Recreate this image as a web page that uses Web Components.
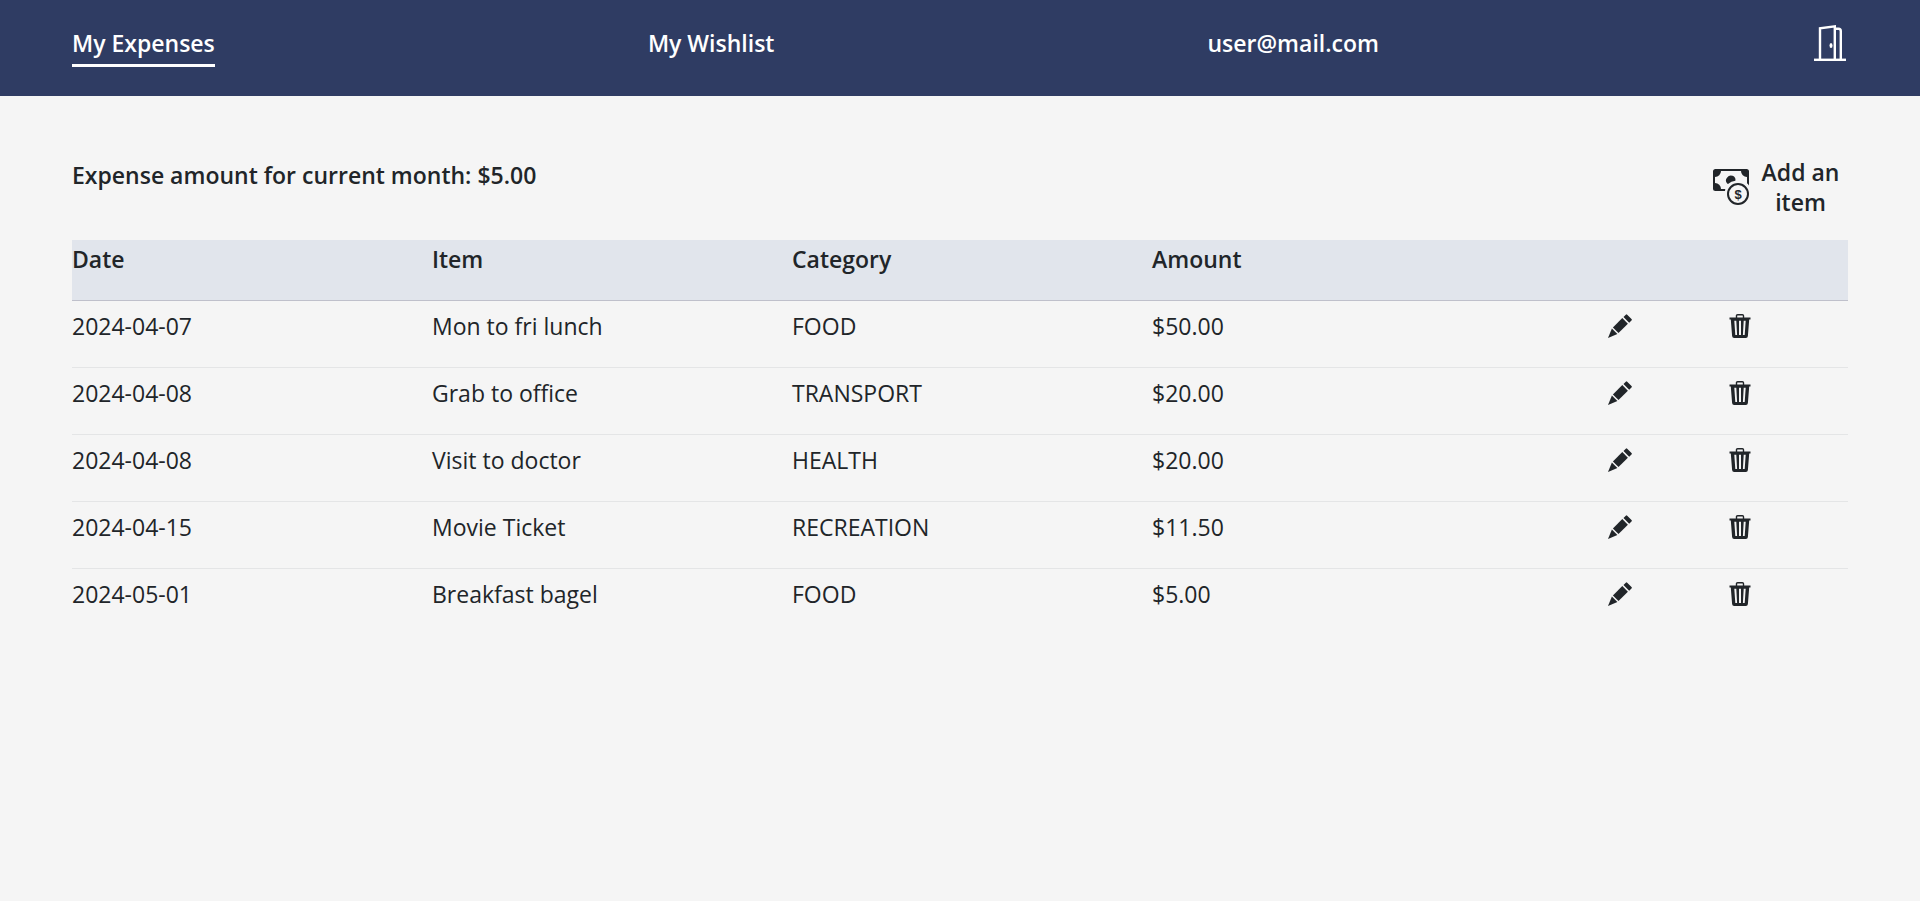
<!DOCTYPE html>
<html lang="en">
<head>
<meta charset="utf-8">
<meta name="viewport" content="width=device-width, initial-scale=1">
<title>My Expenses</title>
<style>
  body {
    margin: 0;
    background: #f5f5f5;
    color: #212529;
    font-family: "Segoe UI", "Open Sans", "Noto Sans", sans-serif;
    font-size: 23px;
    line-height: 36px;
  }
</style>
</head>
<body>
<app-header>
  <nav-link href="#expenses" current>My Expenses</nav-link>
  <nav-link href="#wishlist">My Wishlist</nav-link>
  <nav-link href="#account">user@mail.com</nav-link>
  <nav-link href="#logout" label="Log out"><app-icon name="door"></app-icon></nav-link>
</app-header>
<expense-page>
  <expense-summary slot="summary" amount="$5.00"></expense-summary>
  <expense-table></expense-table>
</expense-page>

<script>
const ICONS = {
  door: `<svg width="36" height="36" viewBox="0 0 36 36" fill="none" stroke="currentColor" stroke-width="2.400">
    <path d="M2 34.800h32"/><path d="M8 35V3.400L22.800 1.400V35"/><path d="M23 3.800h3.500q2.300 0 2.300 2.300V35"/>
    <ellipse cx="19" cy="20.500" rx="1.500" ry="2.500" fill="currentColor" stroke="none"/></svg>`,
  money: `<svg width="36" height="36" viewBox="0 0 36 36" fill="currentColor">
    <path d="M2.500 0h31a2.500 2.500 0 0 1 2.500 2.500V16.500a13 13 0 0 0-2-2.300V8a6 6 0 0 1-6-6H8a6 6 0 0 1-6 6v6a6 6 0 0 1 6 6h4.300a13 13 0 0 0-.3 2H2.500A2.500 2.500 0 0 1 0 19.500v-17A2.500 2.500 0 0 1 2.500 0z"/>
    <path d="M14.200 14.500A4.500 4.500 0 0 1 14.200 8.500a4.500 4.500 0 0 1 8.200 3.200 12.500 12.500 0 0 0-7.400 3.300z"/>
    <circle cx="25" cy="25" r="10" fill="none" stroke="currentColor" stroke-width="2"/>
    <text x="25" y="29.500" text-anchor="middle" font-family="Liberation Sans, sans-serif" font-size="13">$</text></svg>`,
  pencil: `<svg width="24" height="24" viewBox="0 0 24 24" fill="currentColor">
    <path d="M0 24 3.900 14.600 9.400 20z"/><path d="M4.900 13.400 14.300 4.100 19.900 9.700 10.500 19z"/>
    <path d="M15.500 3 17.800.7q.7-.7 1.400 0l4.300 4.300q.7.700 0 1.400L21.200 8.700z"/></svg>`,
  trash: `<svg width="24" height="24" viewBox="0 0 24 24">
    <path d="M8.500 4V1.800q0-1.100 1.100-1.100h4.800q1.100 0 1.100 1.100V4" fill="none" stroke="currentColor" stroke-width="1.400"/>
    <path fill="currentColor" fill-rule="evenodd" d="M1.500 3.400h21v2h-1.300L19.900 22q-.2 2-2 2H6.100q-1.800 0-2-2L2.800 5.400H1.500zM6.300 6.800 7.300 21h1.800L8.300 6.800zM11 6.800V21h2V6.800zM15.700 6.800 14.900 21h1.800L17.700 6.800z"/></svg>`
};

class AppIcon extends HTMLElement {
  constructor() { super(); this.attachShadow({ mode: "open" }); }
  connectedCallback() {
    this.shadowRoot.innerHTML = `<style>:host{display:block;flex:none}svg{display:block}</style>` +
      ICONS[this.getAttribute("name")].replace("<svg", '<svg aria-hidden="true"');
  }
}
customElements.define("app-icon", AppIcon);

class NavLink extends HTMLElement {
  constructor() { super(); this.attachShadow({ mode: "open" }); }
  connectedCallback() {
    this.shadowRoot.innerHTML = `<style>
      :host { display: block; }
      a { display: block; color: #fff; font-weight: 600; text-decoration: none;
          padding-bottom: 3px; border-bottom: 3px solid transparent; }
      :host([current]) a { border-color: #fff; }
    </style><a><slot></slot></a>`;
    const a = this.shadowRoot.querySelector("a");
    a.href = this.getAttribute("href");
    if (this.hasAttribute("label")) a.setAttribute("aria-label", this.getAttribute("label"));
    if (this.hasAttribute("current")) a.setAttribute("aria-current", "page");
  }
}
customElements.define("nav-link", NavLink);

class AppHeader extends HTMLElement {
  constructor() {
    super();
    this.attachShadow({ mode: "open" }).innerHTML = `<style>
      :host { display: block; background: #2f3c63; }
      nav { display: flex; justify-content: space-between; align-items: flex-start; padding: 25px 72px 29px; }
    </style><nav><slot></slot></nav>`;
  }
}
customElements.define("app-header", AppHeader);

class ExpensePage extends HTMLElement {
  constructor() {
    super();
    this.attachShadow({ mode: "open" }).innerHTML = `<style>
      :host { display: block; }
      main { display: grid; gap: 20px; padding: 60px 72px; }
    </style><main><slot name="summary"></slot><slot></slot></main>`;
  }
}
customElements.define("expense-page", ExpensePage);

class ExpenseSummary extends HTMLElement {
  constructor() { super(); this.attachShadow({ mode: "open" }); }
  connectedCallback() {
    this.shadowRoot.innerHTML = `<style>
      :host { display: flex; justify-content: space-between; align-items: flex-start; font-weight: 600; }
      p { margin: 0; padding-top: 1px; }
      button { display: flex; align-items: center; gap: 4px; width: 135px; margin: 0; padding: 0 0 3px;
        border: 0; background: none; color: inherit; font: inherit; line-height: 30px; cursor: pointer; }
      span { flex: 1; padding-top: 1px; text-align: center; }
    </style>
    <p>Expense amount for current month: ${this.getAttribute("amount")}</p>
    <button type="button"><app-icon name="money"></app-icon><span>Add an item</span></button>`;
  }
}
customElements.define("expense-summary", ExpenseSummary);

const EXPENSES = [
  ["2024-04-07", "Mon to fri lunch", "FOOD", "$50.00"],
  ["2024-04-08", "Grab to office", "TRANSPORT", "$20.00"],
  ["2024-04-08", "Visit to doctor", "HEALTH", "$20.00"],
  ["2024-04-15", "Movie Ticket", "RECREATION", "$11.50"],
  ["2024-05-01", "Breakfast bagel", "FOOD", "$5.00"]
];

class ExpenseTable extends HTMLElement {
  constructor() { super(); this.attachShadow({ mode: "open" }); }
  connectedCallback() {
    const rows = EXPENSES.map(row => `<tr>${row.map(v => `<td>${v}</td>`).join("")}
      <td><div class="actions">
        <button type="button" aria-label="Edit ${row[1]}"><app-icon name="pencil"></app-icon></button>
        <button type="button" aria-label="Delete ${row[1]}"><app-icon name="trash"></app-icon></button>
      </div></td></tr>`).join("");
    this.shadowRoot.innerHTML = `<style>
      :host { display: block; }
      table { width: 100%; table-layout: fixed; border-spacing: 0; }
      .tools { width: 336px; }
      th { padding: 1px 0 23px; background: #e1e5ec; border-bottom: 1px solid #bfc0cb;
        text-align: left; vertical-align: top; font-weight: 600; }
      td { padding: 7px 0 23px; border-bottom: 1px solid #e4e5e6; vertical-align: top; }
      tr:last-child td { border-bottom: 0; }
      .actions { display: flex; justify-content: center; height: 36px; }
      button { display: flex; align-items: center; justify-content: center; width: 120px;
        margin: 0; padding: 0; border: 0; background: none; color: inherit; cursor: pointer; }
    </style>
    <table>
      <colgroup><col><col><col><col><col class="tools"></colgroup>
      <thead><tr><th scope="col">Date</th><th scope="col">Item</th><th scope="col">Category</th><th scope="col">Amount</th><th scope="col" aria-label="Actions"></th></tr></thead>
      <tbody>${rows}</tbody>
    </table>`;
  }
}
customElements.define("expense-table", ExpenseTable);
</script>
</body>
</html>
